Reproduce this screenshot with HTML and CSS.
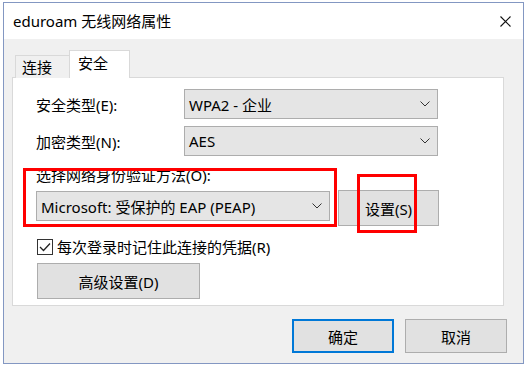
FILE: index.html
```html
<!DOCTYPE html>
<html lang="zh-CN">
<head>
    <meta charset="UTF-8">
    <title>eduroam 无线网络属性</title>
    <link rel="stylesheet" href="styles.css">
</head>
<body>
    <div class="window">
        <div class="titlebar">
            <span class="title">eduroam 无线网络属性</span>
            <svg class="close" width="13" height="11" viewBox="0 0 13 11">
                <path d="M1.5 0.5 L11.5 10.5 M11.5 0.5 L1.5 10.5" stroke="#111" stroke-width="1.1" fill="none"/>
            </svg>
        </div>

        <div class="content">
            <div class="tabs">
                <div class="tab">连接</div>
                <div class="tab active">安全</div>
            </div>

            <div class="panel">
                <div class="field first">
                    <span class="label">安全类型(E):</span>
                    <div class="select wide">
                        <span>WPA2 - 企业</span>
                        <svg class="chevron" width="10" height="6" viewBox="0 0 10 6"><path d="M0.5 0.5 L5 5 L9.5 0.5" stroke="#333" fill="none"/></svg>
                    </div>
                </div>
                <div class="field">
                    <span class="label">加密类型(N):</span>
                    <div class="select wide">
                        <span>AES</span>
                        <svg class="chevron" width="10" height="6" viewBox="0 0 10 6"><path d="M0.5 0.5 L5 5 L9.5 0.5" stroke="#333" fill="none"/></svg>
                    </div>
                </div>

                <div class="method-label">选择网络身份验证方法(O):</div>
                <div class="method-row">
                    <div class="select method">
                        <span>Microsoft: 受保护的 EAP (PEAP)</span>
                        <svg class="chevron" width="10" height="6" viewBox="0 0 10 6"><path d="M0.5 0.5 L5 5 L9.5 0.5" stroke="#333" fill="none"/></svg>
                    </div>
                    <button class="btn settings">设置(S)</button>
                </div>

                <label class="check-row">
                    <span class="checkbox">
                        <svg width="12" height="10" viewBox="0 0 12 10"><path d="M1 5 L4.5 8.5 L11 1.5" stroke="#222" stroke-width="1.3" fill="none"/></svg>
                    </span>
                    每次登录时记住此连接的凭据(R)
                </label>

                <button class="btn advanced">高级设置(D)</button>
            </div>

            <div class="actions">
                <button class="btn primary">确定</button>
                <button class="btn">取消</button>
            </div>
        </div>

        <!-- annotation boxes drawn over the dialog -->
        <div class="mark mark-method"></div>
        <div class="mark mark-settings"></div>
    </div>
</body>
</html>
```

FILE: styles.css
```css
body {
    margin: 0;
    background-color: #fff;
    font-family: "Noto Sans", "Noto Sans CJK SC", sans-serif;
    font-size: 15px;
    color: #000;
}

.window {
    position: relative;
    margin: 2px 0 0 3px;
    width: 521px;
    height: 362px;
    box-sizing: border-box;
    border: 1px solid #8397c2;
    background-color: #f0f0f0;
}

.titlebar {
    display: flex;
    align-items: center;
    justify-content: space-between;
    height: 36px;
    padding: 0 11px 0 9px;
    background-color: #fff;
}

.title {
    line-height: 20px;
}

.content {
    padding: 11px 0 0 8px;
}

.tabs {
    display: flex;
    align-items: flex-end;
    height: 28px;
    margin: 0 0 -1px 3px;
    position: relative;
    z-index: 1;
}

.tab {
    box-sizing: border-box;
    width: 56px;
    height: 23px;
    padding: 1px 0 0 6px;
    border: 1px solid #d9d9d9;
    border-bottom: none;
    background-color: #f0f0f0;
    line-height: 20px;
}

.tab.active {
    width: 61px;
    height: 28px;
    margin-left: -2px;
    padding: 0 0 0 8px;
    background-color: #fff;
    line-height: 24px;
}

.panel {
    box-sizing: border-box;
    width: 492px;
    height: 229px;
    padding: 11px 0 0 23px;
    border: 1px solid #d9d9d9;
    background-color: #fff;
}

.field {
    display: flex;
    align-items: center;
    margin-top: 7px;
}

.field.first {
    margin-top: 0;
}

.label {
    width: 148px;
}

.select {
    box-sizing: border-box;
    display: flex;
    align-items: center;
    justify-content: space-between;
    height: 30px;
    padding: 0 7px 0 4px;
    border: 1px solid #adadad;
    background-color: #e5e5e5;
}

.select.wide {
    width: 254px;
}

.select.method {
    width: 294px;
    margin-top: 1px;
}

.method-label {
    margin-top: 9px;
    line-height: 20px;
}

.method-row {
    display: flex;
    align-items: flex-start;
    margin-top: 5px;
}

.btn {
    box-sizing: border-box;
    font-family: inherit;
    font-size: 15px;
    color: #000;
    background-color: #e1e1e1;
    border: 1px solid #adadad;
    padding: 0;
}

.settings {
    width: 101px;
    height: 36px;
    margin-left: 8px;
}

.check-row {
    display: flex;
    align-items: center;
    gap: 4px;
    margin: 13px 0 0 1px;
    height: 16px;
    line-height: 16px;
}

.checkbox {
    box-sizing: border-box;
    display: flex;
    align-items: center;
    justify-content: center;
    width: 16px;
    height: 16px;
    border: 1px solid #333;
    background-color: #fff;
}

.advanced {
    display: block;
    width: 163px;
    height: 36px;
    margin: 8px 0 0 1px;
}

.actions {
    display: flex;
    justify-content: flex-end;
    gap: 11px;
    margin-top: 13px;
    padding-right: 16px;
}

.actions .btn {
    width: 102px;
    height: 34px;
}

.actions .primary {
    border: 2px solid #0078d7;
}

.mark {
    position: absolute;
    box-sizing: border-box;
    border: 3px solid #ff0000;
}

.mark-method {
    left: 19px;
    top: 165px;
    width: 314px;
    height: 59px;
}

.mark-settings {
    left: 353px;
    top: 171px;
    width: 60px;
    height: 59px;
}
```
